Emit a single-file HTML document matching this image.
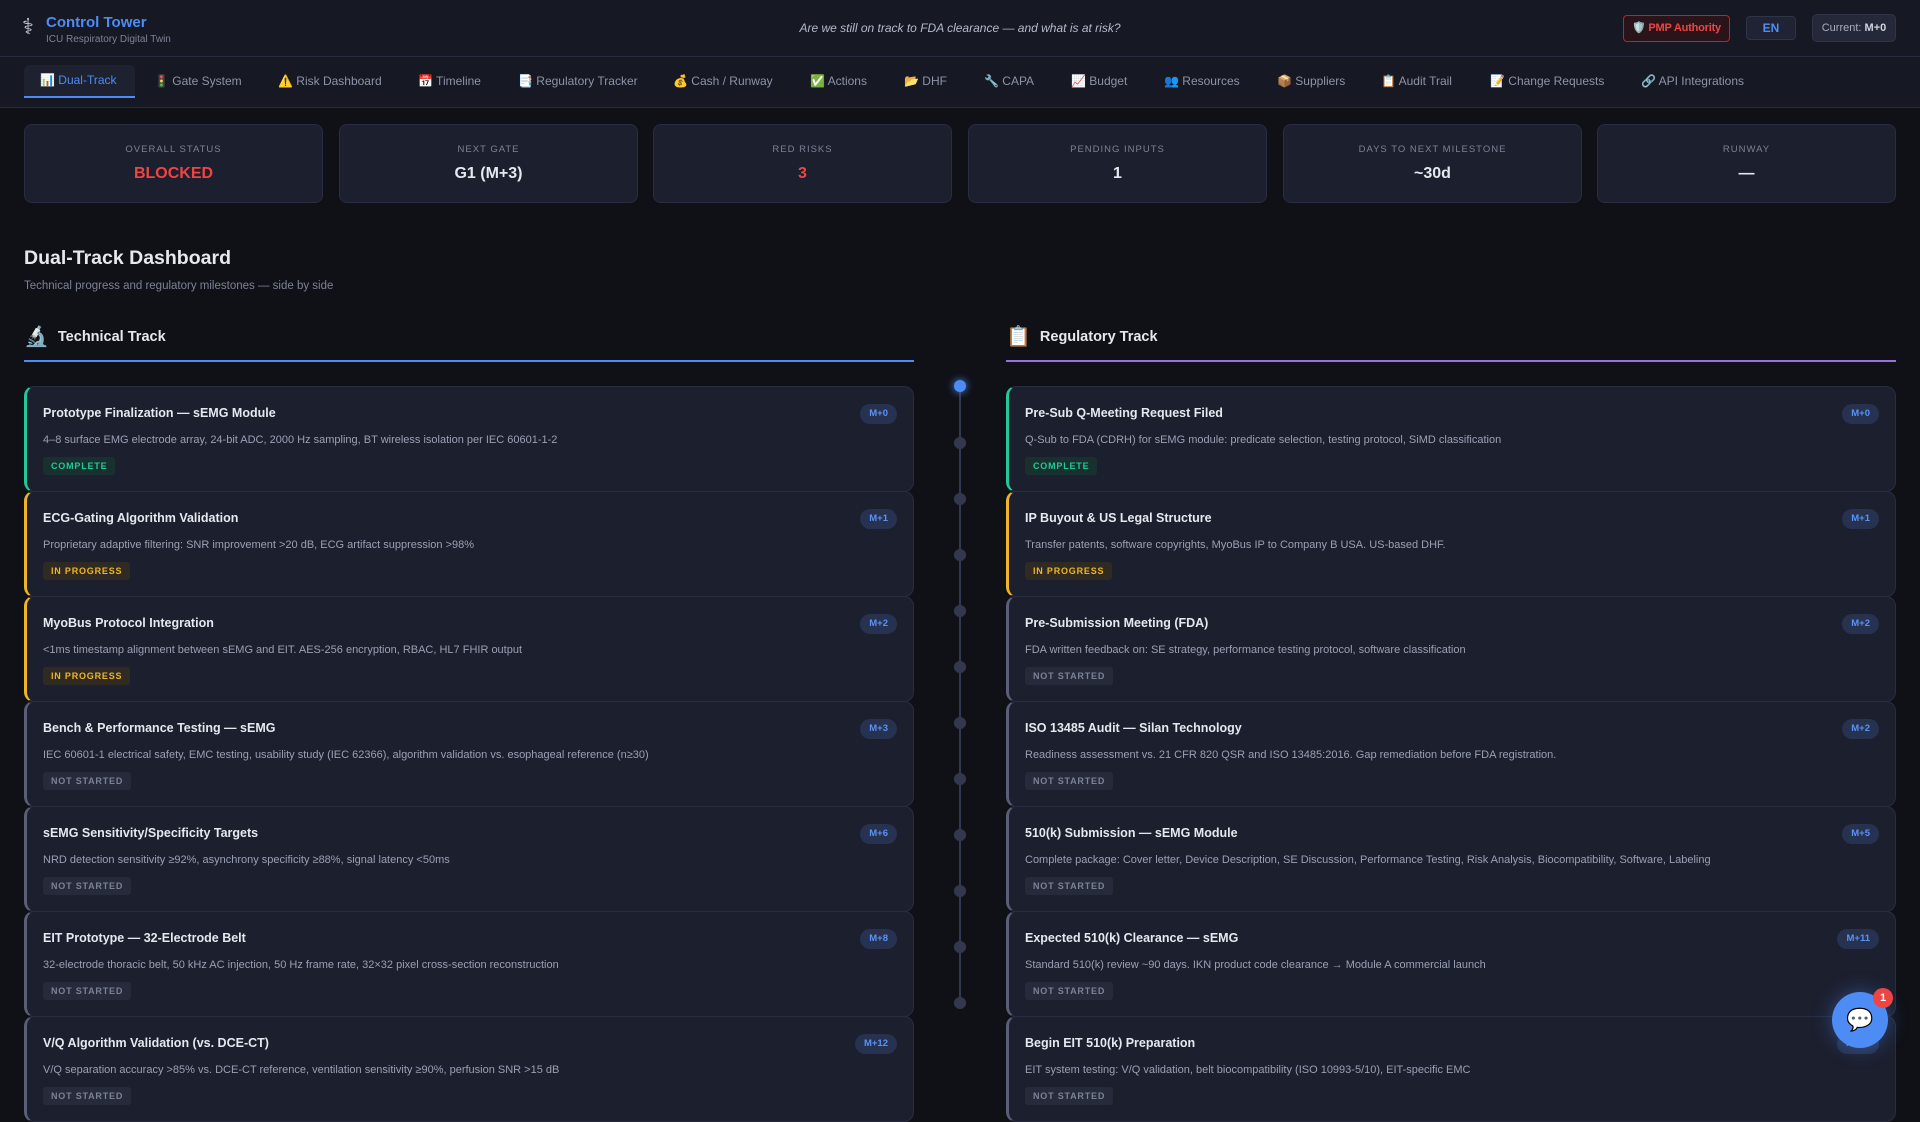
<!DOCTYPE html>
<html><head><meta charset="utf-8"><style>
*{box-sizing:border-box;margin:0;padding:0}
body{width:1920px;height:1080px;overflow:hidden;background:#101117;font-family:"Liberation Sans","Noto Sans CJK SC",sans-serif;color:#e6e8ef;position:relative}
.hdr{height:57px;background:#161923;border-bottom:1px solid #2a2d42;position:relative}
.logo{position:absolute;left:22px;top:14px;font-size:22px;color:#cfd3de}
.brand{position:absolute;left:46px;top:14px;font-size:15px;font-weight:bold;color:#4d8cf5}
.brand small{display:block;font-size:10px;font-weight:normal;color:#7c8296;margin-top:3px}
.q{position:absolute;left:0;right:0;top:21px;text-align:center;font-size:12px;font-style:italic;color:#b5bacb}
.pmp{position:absolute;left:1623px;top:15px;width:107px;height:27px;border:1px solid #b3262c;border-radius:4px;background:#2a1419;color:#ef4444;font-size:11px;font-weight:bold;line-height:25px;text-align:center;white-space:nowrap;letter-spacing:-.2px}
.en{position:absolute;left:1746px;top:16px;width:50px;height:24px;border:1px solid #2f3448;border-radius:4px;background:#1f2333;color:#4d8cf5;font-size:12px;font-weight:bold;line-height:22px;text-align:center}
.cur{position:absolute;left:1812px;top:14px;width:84px;height:28px;border:1px solid #2f3448;border-radius:5px;background:#242838;color:#a8adbf;font-size:11px;line-height:26px;text-align:center;white-space:nowrap}
.cur b{color:#d0d4df}
.nav{height:51px;background:#161923;border-bottom:1px solid #2a2d42;position:relative}
.nav span{position:absolute;top:17px;font-size:12px;color:#8d93a8;white-space:nowrap}
.nav .act{left:24px;top:8px;width:111px;height:33px;background:#1d2130;border-radius:5px 5px 0 0;border-bottom:2px solid #4d8cf5;color:#4d8cf5;padding:8px 0 0 16px}
.stat{position:absolute;top:124px;width:299px;height:79px;background:#1c1f2e;border:1px solid #2a2d42;border-radius:8px;text-align:center}
.stat .l{font-size:9.5px;letter-spacing:1px;color:#7c8296;margin-top:19px}
.stat .v{font-size:16px;font-weight:bold;margin-top:10px;color:#e6e8ef}
h1{position:absolute;left:24px;top:247px;font-size:19.5px;font-weight:bold}
.sub{position:absolute;left:24px;top:280px;font-size:11.5px;color:#7c8296}
.th{position:absolute;top:324px;font-size:14.5px;font-weight:bold;display:flex;align-items:center;gap:9px}
.th i{font-style:normal;font-size:20px}
.ln{position:absolute;top:360px;height:2px}
.card{position:absolute;width:890px;height:106px;background:#1c1f2e;border:1px solid #2a2d42;border-left:3px solid #5a5f78;border-radius:10px}
.card .t{position:absolute;left:16px;top:19px;font-size:12.5px;font-weight:bold;color:#e6e8ef}
.card .d{position:absolute;left:16px;top:47px;font-size:11px;color:#9aa0b4;white-space:nowrap}
.card .b{position:absolute;left:16px;top:70px;height:18px;padding:0 8px;font-size:9px;font-weight:bold;letter-spacing:.8px;line-height:18px;border-radius:3px}
.card .m{position:absolute;right:16px;top:17px;height:20px;padding:0 9px;border-radius:10px;background:#26324f;color:#5b93f5;font-size:9.5px;font-weight:bold;line-height:20px}
.c{border-left-color:#22c997}.c .b{background:#18302e;color:#22c997}
.p{border-left-color:#f0b429}.p .b{background:#2f2a22;color:#f0b429}
.n .b{background:#262a3a;color:#7c8296}
.dot{position:absolute;left:954px;width:12px;height:12px;border-radius:50%;background:#34384f}
.vl{position:absolute;left:959px;top:392px;width:2px;height:612px;background:#34384f}
.fab{position:absolute;left:1832px;top:992px;width:56px;height:56px;border-radius:50%;background:#4d8cf5;box-shadow:0 0 20px rgba(77,140,245,.4);text-align:center;line-height:56px;font-size:22px}
.badge{position:absolute;left:1873px;top:988px;width:20px;height:20px;border-radius:50%;background:#ef4444;color:#fff;font-size:11px;font-weight:bold;text-align:center;line-height:20px}
</style></head><body>
<div class="hdr">
<div class="logo">⚕</div>
<div class="brand">Control Tower<small>ICU Respiratory Digital Twin</small></div>
<div class="q">Are we still on track to FDA clearance — and what is at risk?</div>
<div class="pmp">🛡️ PMP Authority</div>
<div class="en">EN</div>
<div class="cur">Current: <b>M+0</b></div>
</div>
<div class="nav">
<span class="act">📊 Dual-Track</span>
<span style="left:154px">🚦 Gate System</span>
<span style="left:278px">⚠️ Risk Dashboard</span>
<span style="left:418px">📅 Timeline</span>
<span style="left:518px">📑 Regulatory Tracker</span>
<span style="left:673px">💰 Cash / Runway</span>
<span style="left:810px">✅ Actions</span>
<span style="left:904px">📂 DHF</span>
<span style="left:984px">🔧 CAPA</span>
<span style="left:1071px">📈 Budget</span>
<span style="left:1164px">👥 Resources</span>
<span style="left:1277px">📦 Suppliers</span>
<span style="left:1381px">📋 Audit Trail</span>
<span style="left:1490px">📝 Change Requests</span>
<span style="left:1641px">🔗 API Integrations</span>
</div>
<div class="stat" style="left:24px"><div class="l">OVERALL STATUS</div><div class="v" style="color:#ef4444">BLOCKED</div></div>
<div class="stat" style="left:339px"><div class="l">NEXT GATE</div><div class="v">G1 (M+3)</div></div>
<div class="stat" style="left:653px"><div class="l">RED RISKS</div><div class="v" style="color:#ef4444">3</div></div>
<div class="stat" style="left:968px"><div class="l">PENDING INPUTS</div><div class="v">1</div></div>
<div class="stat" style="left:1283px"><div class="l">DAYS TO NEXT MILESTONE</div><div class="v">~30d</div></div>
<div class="stat" style="left:1597px"><div class="l">RUNWAY</div><div class="v">—</div></div>
<h1>Dual-Track Dashboard</h1>
<div class="sub">Technical progress and regulatory milestones — side by side</div>
<div class="th" style="left:24px"><i>🔬</i>Technical Track</div>
<div class="ln" style="left:24px;width:890px;background:#4d8cf5"></div>
<div class="th" style="left:1006px"><i>📋</i>Regulatory Track</div>
<div class="ln" style="left:1006px;width:890px;background:#9b6fe0"></div>

<div class="card c" style="left:24px;top:386px"><div class="t">Prototype Finalization — sEMG Module</div><div class="m">M+0</div><div class="d">4–8 surface EMG electrode array, 24-bit ADC, 2000 Hz sampling, BT wireless isolation per IEC 60601-1-2</div><div class="b">COMPLETE</div></div>
<div class="card p" style="left:24px;top:491px"><div class="t">ECG-Gating Algorithm Validation</div><div class="m">M+1</div><div class="d">Proprietary adaptive filtering: SNR improvement &gt;20 dB, ECG artifact suppression &gt;98%</div><div class="b">IN PROGRESS</div></div>
<div class="card p" style="left:24px;top:596px"><div class="t">MyoBus Protocol Integration</div><div class="m">M+2</div><div class="d">&lt;1ms timestamp alignment between sEMG and EIT. AES-256 encryption, RBAC, HL7 FHIR output</div><div class="b">IN PROGRESS</div></div>
<div class="card n" style="left:24px;top:701px"><div class="t">Bench &amp; Performance Testing — sEMG</div><div class="m">M+3</div><div class="d">IEC 60601-1 electrical safety, EMC testing, usability study (IEC 62366), algorithm validation vs. esophageal reference (n≥30)</div><div class="b">NOT STARTED</div></div>
<div class="card n" style="left:24px;top:806px"><div class="t">sEMG Sensitivity/Specificity Targets</div><div class="m">M+6</div><div class="d">NRD detection sensitivity ≥92%, asynchrony specificity ≥88%, signal latency &lt;50ms</div><div class="b">NOT STARTED</div></div>
<div class="card n" style="left:24px;top:911px"><div class="t">EIT Prototype — 32-Electrode Belt</div><div class="m">M+8</div><div class="d">32-electrode thoracic belt, 50 kHz AC injection, 50 Hz frame rate, 32×32 pixel cross-section reconstruction</div><div class="b">NOT STARTED</div></div>
<div class="card n" style="left:24px;top:1016px"><div class="t">V/Q Algorithm Validation (vs. DCE-CT)</div><div class="m">M+12</div><div class="d">V/Q separation accuracy &gt;85% vs. DCE-CT reference, ventilation sensitivity ≥90%, perfusion SNR &gt;15 dB</div><div class="b">NOT STARTED</div></div>

<div class="card c" style="left:1006px;top:386px"><div class="t">Pre-Sub Q-Meeting Request Filed</div><div class="m">M+0</div><div class="d">Q-Sub to FDA (CDRH) for sEMG module: predicate selection, testing protocol, SiMD classification</div><div class="b">COMPLETE</div></div>
<div class="card p" style="left:1006px;top:491px"><div class="t">IP Buyout &amp; US Legal Structure</div><div class="m">M+1</div><div class="d">Transfer patents, software copyrights, MyoBus IP to Company B USA. US-based DHF.</div><div class="b">IN PROGRESS</div></div>
<div class="card n" style="left:1006px;top:596px"><div class="t">Pre-Submission Meeting (FDA)</div><div class="m">M+2</div><div class="d">FDA written feedback on: SE strategy, performance testing protocol, software classification</div><div class="b">NOT STARTED</div></div>
<div class="card n" style="left:1006px;top:701px"><div class="t">ISO 13485 Audit — Silan Technology</div><div class="m">M+2</div><div class="d">Readiness assessment vs. 21 CFR 820 QSR and ISO 13485:2016. Gap remediation before FDA registration.</div><div class="b">NOT STARTED</div></div>
<div class="card n" style="left:1006px;top:806px"><div class="t">510(k) Submission — sEMG Module</div><div class="m">M+5</div><div class="d">Complete package: Cover letter, Device Description, SE Discussion, Performance Testing, Risk Analysis, Biocompatibility, Software, Labeling</div><div class="b">NOT STARTED</div></div>
<div class="card n" style="left:1006px;top:911px"><div class="t">Expected 510(k) Clearance — sEMG</div><div class="m">M+11</div><div class="d">Standard 510(k) review ~90 days. IKN product code clearance → Module A commercial launch</div><div class="b">NOT STARTED</div></div>
<div class="card n" style="left:1006px;top:1016px"><div class="t">Begin EIT 510(k) Preparation</div><div class="m">M+14</div><div class="d">EIT system testing: V/Q validation, belt biocompatibility (ISO 10993-5/10), EIT-specific EMC</div><div class="b">NOT STARTED</div></div>

<div class="vl"></div>
<div class="dot" style="top:380px;background:#4d8cf5;box-shadow:0 0 8px #4d8cf5"></div>
<div class="dot" style="top:437px"></div><div class="dot" style="top:493px"></div><div class="dot" style="top:549px"></div><div class="dot" style="top:605px"></div><div class="dot" style="top:661px"></div><div class="dot" style="top:717px"></div><div class="dot" style="top:773px"></div><div class="dot" style="top:829px"></div><div class="dot" style="top:885px"></div><div class="dot" style="top:941px"></div><div class="dot" style="top:997px"></div>
<div class="fab">💬</div><div class="badge">1</div>
</body></html>
